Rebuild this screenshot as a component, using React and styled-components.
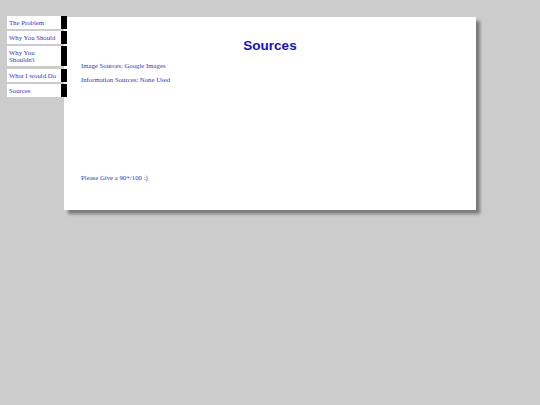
import React from "react";
import styled, { createGlobalStyle } from "styled-components";

const GlobalStyle = createGlobalStyle`
  html, body {
    margin: 0;
    padding: 0;
    background: #cccccc;
  }
  body {
    font-family: "Liberation Serif", "Times New Roman", serif;
  }
`;

const Page = styled.div`
  display: flex;
  align-items: flex-start;
  padding: 16px 0 0 7px;
  min-height: 389px;
`;

const Nav = styled.ul`
  list-style: none;
  margin: 0;
  padding: 0;
  width: 60px;
  position: relative;
  z-index: 1;
  display: flex;
  flex-direction: column;
  gap: 2px;
`;

const NavItem = styled.li`
  background: #ffffff;
  border-right: 6px solid #000000;
  padding: 3px 2px;
  font-size: 6.75px;
  line-height: 7px;
  color: #3333cc;
  margin-top: ${(props) => (props.$extra ? "1px" : "0")};
`;

const Panel = styled.main`
  margin: 1px 0 0 -3px;
  width: 412px;
  height: 193px;
  box-sizing: border-box;
  padding: 21px 17px 0 17px;
  background: #ffffff;
  box-shadow: 4px 4px 3px #7a7a7a;
`;

const Title = styled.h1`
  margin: 0;
  text-align: center;
  font-family: "Liberation Sans", Arial, sans-serif;
  font-size: 13.5px;
  line-height: 16px;
  font-weight: bold;
  color: #1111cc;
`;

const Line = styled.p`
  margin: ${(props) => props.$top || "0"} 0 0 0;
  font-size: 6.75px;
  line-height: 8px;
  color: #3333cc;
`;

const navLinks = [
  "The Problem",
  "Why You Should",
  "Why You Shouldn't",
  "What I would Do",
  "Sources",
];

const App = () => {
  return (
    <>
      <GlobalStyle />
      <Page>
        <Nav>
          {navLinks.map((label, i) => (
            <NavItem key={label} $extra={i === 3}>
              {label}
            </NavItem>
          ))}
        </Nav>
        <Panel>
          <Title>Sources</Title>
          <Line $top="8px">Image Sources: Google Images</Line>
          <Line $top="6px">Information Sources: None Used</Line>
          <Line $top="90px">Please Give a 90+/100 :)</Line>
        </Panel>
      </Page>
    </>
  );
};

export default App;
